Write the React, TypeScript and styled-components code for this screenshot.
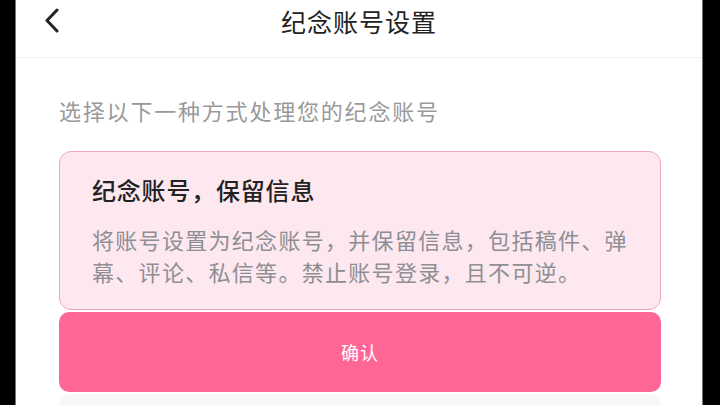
import React from 'react';
import styled, { createGlobalStyle } from 'styled-components';

const GlobalStyle = createGlobalStyle`
    html, body {
        margin: 0;
        padding: 0;
        background: #000;
    }
    body {
        font-family: "Noto Sans CJK SC", "Noto Sans", sans-serif;
    }
`;

const Frame = styled.div`
    display: flex;
    width: 720px;
    height: 405px;
    background: #000;
    overflow: hidden;
`;

const Screen = styled.div`
    margin-left: 15px;
    width: 688px;
    height: 405px;
    background: #fff;
    border-left: 1px solid #777;
    border-right: 1px solid #777;
    box-sizing: border-box;
    display: flex;
    flex-direction: column;
`;

const Header = styled.div`
    display: grid;
    grid-template-columns: 60px 1fr 60px;
    align-items: center;
    height: 57px;
    border-bottom: 1px solid #f1f1f1;
    flex-shrink: 0;
`;

const BackButton = styled.div`
    display: flex;
    align-items: center;
    padding-left: 28px;
    height: 100%;
    margin-top: -15px;
`;

const Title = styled.div`
    text-align: center;
    font-size: 25px;
    letter-spacing: 1px;
    color: #222;
    margin-top: -16px;
`;

const Content = styled.div`
    display: flex;
    flex-direction: column;
    padding: 0 41px 0 43px;
`;

const Hint = styled.div`
    margin-top: 37px;
    line-height: 30px;
    font-size: 22px;
    letter-spacing: 1.8px;
    color: #999;
`;

const OptionCard = styled.div<{ $active?: boolean }>`
    margin-top: 26px;
    border: 1.5px solid ${(p) => (p.$active ? '#f2a5bf' : '#eee')};
    background: ${(p) => (p.$active ? '#fde8f0' : '#f6f6f8')};
    border-radius: 12px;
    padding: 21px 20px 22px 32px;
`;

const OptionTitle = styled.div`
    font-size: 24px;
    line-height: 34px;
    letter-spacing: 0.8px;
    color: #222;
    font-weight: 500;
`;

const OptionDesc = styled.div`
    margin-top: 16px;
    font-size: 22px;
    line-height: 32px;
    letter-spacing: 1.3px;
    color: #8e8e93;
`;

const ConfirmButton = styled.button`
    margin-top: 2px;
    height: 80px;
    border: none;
    border-radius: 10px;
    background: #fe6795;
    color: #fff;
    font-family: inherit;
    font-size: 18px;
    letter-spacing: 1px;
    cursor: pointer;
`;

const NextOption = styled.div`
    margin-top: 2px;
    height: 40px;
    background: #f7f7f9;
    border-radius: 10px 10px 0 0;
`;

const ChevronLeft = () => (
    <svg width="16" height="26" viewBox="0 0 16 26">
        <polyline points="13,2 3,12.5 13,23" fill="none" stroke="#222" strokeWidth="3" strokeLinecap="round" strokeLinejoin="round" />
    </svg>
);

const App: React.FC = () => {
    return (
        <>
            <GlobalStyle />
            <Frame>
                <Screen>
                    <Header>
                        <BackButton>
                            <ChevronLeft />
                        </BackButton>
                        <Title>纪念账号设置</Title>
                        <div />
                    </Header>
                    <Content>
                        <Hint>选择以下一种方式处理您的纪念账号</Hint>
                        <OptionCard $active>
                            <OptionTitle>纪念账号，保留信息</OptionTitle>
                            <OptionDesc>将账号设置为纪念账号，并保留信息，包括稿件、弹幕、评论、私信等。禁止账号登录，且不可逆。</OptionDesc>
                        </OptionCard>
                        <ConfirmButton>确认</ConfirmButton>
                        <NextOption />
                    </Content>
                </Screen>
            </Frame>
        </>
    );
};

export default App;
